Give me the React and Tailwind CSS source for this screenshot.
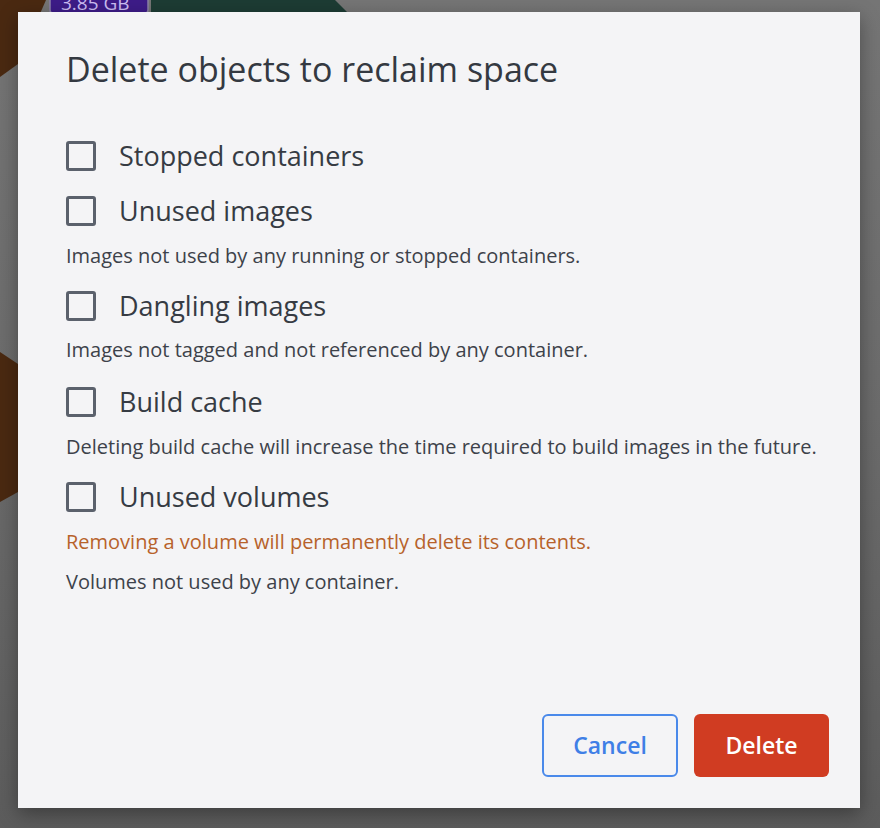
function Checkbox() {
  return <span className="block w-[30px] h-[30px] shrink-0 rounded-[3px] border-[3px] border-[#5b616c] bg-[#f4f4f6]" />;
}

function Row({ label, className = "" }) {
  return (
    <label className={`flex h-[46px] items-center gap-[23px] ${className}`}>
      <Checkbox />
      <span className="text-[27px] leading-[46px] text-[#363b43]">{label}</span>
    </label>
  );
}

function Desc({ children, className = "" }) {
  return <p className={`h-[28px] text-[20px] leading-[28px] text-[#3d424a] ${className}`}>{children}</p>;
}

export default function App() {
  return (
    <div className="relative h-[828px] w-[880px] overflow-hidden bg-gradient-to-b from-[#757575] via-[#6b6b6b] to-[#5c5c5c] font-['Open_Sans',sans-serif]">
      <svg className="absolute inset-0" width="880" height="828" viewBox="0 0 880 828">
        <polygon points="0,0 46,0 18,64 0,77" fill="#4a2911" />
        <polygon points="0,352 18,364 18,492 0,502" fill="#4a2911" />
        <rect x="50" y="-12" width="98" height="25" rx="3" fill="#3d1c88" stroke="#8a80a6" strokeWidth="1.5" />
        <text x="61" y="10" fontSize="19" fill="#cbbdf2" fontFamily="Open Sans, sans-serif">3.85 GB</text>
        <polygon points="151,0 335,0 348,13 151,13" fill="#1d3c34" />
        <line x1="0" y1="740" x2="880" y2="740" stroke="#5f5f5f" strokeWidth="1.5" />
      </svg>

      <div className="absolute left-[18px] top-[12px] flex h-[796px] w-[842px] flex-col bg-[#f4f4f6] pb-[31px] pl-[48px] pr-[31px] pt-[37px] shadow-[0_6px_18px_rgba(0,0,0,0.35)]">
        <h1 className="text-[34px] leading-[40px] text-[#343941]">Delete objects to reclaim space</h1>

        <div className="mt-[44px] flex flex-col">
          <Row label="Stopped containers" />
          <Row label="Unused images" className="mt-[9px]" />
          <Desc className="mt-[8px]">Images not used by any running or stopped containers.</Desc>
          <Row label="Dangling images" className="mt-[13px]" />
          <Desc className="mt-[7px]">Images not tagged and not referenced by any container.</Desc>
          <Row label="Build cache" className="mt-[15px]" />
          <Desc className="mt-[8px]">Deleting build cache will increase the time required to build images in the future.</Desc>
          <Row label="Unused volumes" className="mt-[13px]" />
          <Desc className="mt-[8px] text-[#b7622b]">Removing a volume will permanently delete its contents.</Desc>
          <Desc className="mt-[12px]">Volumes not used by any container.</Desc>
        </div>

        <div className="mt-auto flex justify-end gap-[16px]">
          <button className="h-[63px] w-[136px] rounded-[6px] border-2 border-[#4a89ea] bg-[#f4f4f6] text-[23px] font-semibold text-[#3f7fe6]">
            Cancel
          </button>
          <button className="h-[63px] w-[135px] rounded-[6px] bg-[#d03c22] text-[23px] font-semibold text-white">
            Delete
          </button>
        </div>
      </div>
    </div>
  );
}
